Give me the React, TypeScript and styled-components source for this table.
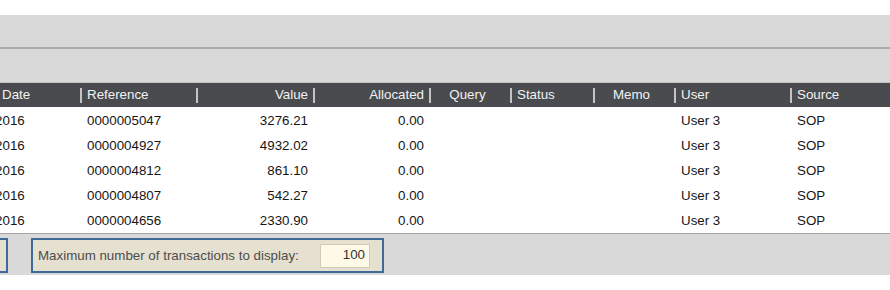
import styled, { createGlobalStyle } from "styled-components";

type Align = "left" | "right" | "center";

interface Column {
  key: string;
  title: string;
  width: string;
  align: Align;
}

interface Transaction {
  date: string;
  reference: string;
  value: string;
  allocated: string;
  query: string;
  status: string;
  memo: string;
  user: string;
  source: string;
}

const columns: Column[] = [
  { key: "date", title: "Date", width: "81px", align: "left" },
  { key: "reference", title: "Reference", width: "116px", align: "left" },
  { key: "value", title: "Value", width: "117px", align: "right" },
  { key: "allocated", title: "Allocated", width: "116px", align: "right" },
  { key: "query", title: "Query", width: "81px", align: "center" },
  { key: "status", title: "Status", width: "83px", align: "left" },
  { key: "memo", title: "Memo", width: "81px", align: "center" },
  { key: "user", title: "User", width: "116px", align: "left" },
  { key: "source", title: "Source", width: "1fr", align: "left" },
];

const transactions: Transaction[] = [
  { date: "28/06/2016", reference: "0000005047", value: "3276.21", allocated: "0.00", query: "", status: "", memo: "", user: "User 3", source: "SOP" },
  { date: "21/06/2016", reference: "0000004927", value: "4932.02", allocated: "0.00", query: "", status: "", memo: "", user: "User 3", source: "SOP" },
  { date: "14/06/2016", reference: "0000004812", value: "861.10", allocated: "0.00", query: "", status: "", memo: "", user: "User 3", source: "SOP" },
  { date: "13/06/2016", reference: "0000004807", value: "542.27", allocated: "0.00", query: "", status: "", memo: "", user: "User 3", source: "SOP" },
  { date: "06/06/2016", reference: "0000004656", value: "2330.90", allocated: "0.00", query: "", status: "", memo: "", user: "User 3", source: "SOP" },
];

const template = columns.map((c) => c.width).join(" ");

export default function App() {
  return (
    <>
      <GlobalStyle />
      <Page>
        <ToolbarBand />
        <FilterBand />
        <Grid>
          <HeaderRow>
            {columns.map((col, index) => (
              <HeaderCell key={col.key} $align={col.align} $divider={index > 0}>
                {col.title}
              </HeaderCell>
            ))}
          </HeaderRow>
          <Body>
            {transactions.map((tx) => (
              <DataRow key={tx.reference}>
                {columns.map((col) =>
                  col.key === "date" ? (
                    <DateCell key={col.key}>{tx.date}</DateCell>
                  ) : (
                    <DataCell key={col.key} $align={col.align}>
                      {tx[col.key as keyof Transaction]}
                    </DataCell>
                  )
                )}
              </DataRow>
            ))}
          </Body>
        </Grid>
        <Footer>
          <StubBox />
          <LimitBox>
            <LimitLabel>Maximum number of transactions to display:</LimitLabel>
            <LimitField>100</LimitField>
          </LimitBox>
        </Footer>
      </Page>
    </>
  );
}

const GlobalStyle = createGlobalStyle`
  body {
    margin: 0;
    background: #ffffff;
    font-family: "Liberation Sans", Arial, sans-serif;
    overflow: hidden;
  }
`;

const Page = styled.div`
  width: 890px;
  padding-top: 15px;
  font-size: 13.33px;
`;

const ToolbarBand = styled.div`
  height: 32px;
  background: #d9d9d9;
  border-bottom: 2px solid #ababab;
`;

const FilterBand = styled.div`
  height: 33px;
  background: #d9d9d9;
  border-bottom: 1px solid #c6c6c6;
`;

const Grid = styled.div`
  display: flex;
  flex-direction: column;
`;

const HeaderRow = styled.div`
  display: grid;
  grid-template-columns: ${template};
  height: 24px;
  background: #4a4b4f;
`;

const HeaderCell = styled.div<{ $align: Align; $divider: boolean }>`
  position: relative;
  display: flex;
  align-items: center;
  justify-content: ${(p) =>
    p.$align === "right" ? "flex-end" : p.$align === "center" ? "center" : "flex-start"};
  padding: 0 ${(p) => (p.$align === "center" ? "10px" : "6px")} 2px
    ${(p) => (p.$divider ? (p.$align === "center" ? "4px" : "6px") : "2px")};
  color: #f2f2f2;
  white-space: nowrap;

  &::before {
    content: "";
    display: ${(p) => (p.$divider ? "block" : "none")};
    position: absolute;
    left: -1px;
    top: 5px;
    bottom: 4px;
    width: 2px;
    background: #c4c4c4;
  }
`;

const Body = styled.div`
  padding-bottom: 1px;
  background: #ffffff;
`;

const DataRow = styled.div`
  display: grid;
  grid-template-columns: ${template};
  height: 25px;
  padding-top: 1px;
  box-sizing: border-box;
  align-items: center;
  color: #161616;
`;

const DataCell = styled.div<{ $align: Align }>`
  padding: 0 6px;
  text-align: ${(p) => p.$align};
  white-space: nowrap;
  overflow: hidden;
`;

const DateCell = styled.div`
  white-space: nowrap;
  text-indent: -42px;
`;

const Footer = styled.div`
  display: flex;
  align-items: flex-start;
  gap: 23px;
  height: 42px;
  padding-top: 4px;
  box-sizing: border-box;
  background: #d9d9d9;
  border-top: 1px solid #a4a4a4;
`;

const StubBox = styled.div`
  width: 60px;
  height: 35px;
  margin-left: -52px;
  box-sizing: border-box;
  background: #e6e0d0;
  border: 2px solid #3d6a98;
`;

const LimitBox = styled.div`
  display: flex;
  align-items: center;
  justify-content: space-between;
  width: 353px;
  height: 35px;
  box-sizing: border-box;
  padding: 0 12px 0 5px;
  background: #e6e0d0;
  border: 2px solid #3d6a98;
`;

const LimitLabel = styled.span`
  color: #4d4d4d;
  white-space: nowrap;
`;

const LimitField = styled.div`
  width: 50px;
  height: 24px;
  box-sizing: border-box;
  padding: 0 4px 2px;
  display: flex;
  align-items: center;
  justify-content: flex-end;
  background: #fff9e7;
  border: 1px solid #d2cab3;
  color: #333333;
`;
